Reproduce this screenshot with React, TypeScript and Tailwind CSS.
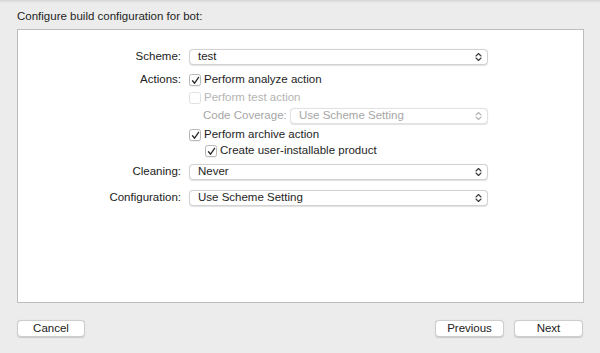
import React from "react";

const font = { fontFamily: '"Liberation Sans", Arial, sans-serif' };

function Chevrons({ disabled }: { disabled?: boolean }) {
  return (
    <svg width="7" height="10" viewBox="0 0 7 10" className="shrink-0">
      <path
        d="M1 4 L3.5 1.5 L6 4 M1 6 L3.5 8.5 L6 6"
        fill="none"
        stroke={disabled ? "#b5b5b5" : "#3a3a3a"}
        strokeWidth="1.1"
        strokeLinecap="round"
        strokeLinejoin="round"
      />
    </svg>
  );
}

function Popup({ value, disabled, className }: { value: string; disabled?: boolean; className?: string }) {
  return (
    <div
      className={
        "h-[16px] shrink-0 flex items-center justify-between pl-[8px] pr-[5px] rounded-[4px] bg-white border shadow-[0_0.5px_1px_rgba(0,0,0,0.12)] text-[11.5px] leading-none " +
        (disabled ? "text-[#a6a6a6] border-[#e2e2e2] " : "text-[#1e1e1e] border-[#d2d2d2] ") +
        (className ?? "")
      }
    >
      <span>{value}</span>
      <Chevrons disabled={disabled} />
    </div>
  );
}

function Check({ checked, disabled }: { checked?: boolean; disabled?: boolean }) {
  return (
    <div
      className={
        "w-[12px] h-[12px] rounded-[2.5px] border bg-white flex items-center justify-center shrink-0 " +
        (disabled ? "border-[#e0e0e0]" : "border-[#b8b8b8] shadow-[0_0.5px_0.5px_rgba(0,0,0,0.1)]")
      }
    >
      {checked && (
        <svg width="9" height="9" viewBox="0 0 9 9">
          <path d="M1.5 4.8 L3.6 7.2 L7.6 1.3" fill="none" stroke="#2a2a2a" strokeWidth="1.3" strokeLinecap="round" strokeLinejoin="round" />
        </svg>
      )}
    </div>
  );
}

function Label({ children }: { children: React.ReactNode }) {
  return (
    <div className="w-[171px] shrink-0 pr-[8px] text-right text-[11.5px] text-[#222] leading-none whitespace-nowrap">
      {children}
    </div>
  );
}

function Button({ children, className }: { children: React.ReactNode; className?: string }) {
  return (
    <div
      className={
        "h-[17px] flex items-center justify-center rounded-[4px] bg-white border border-[#cdcdcd] shadow-[0_0.5px_1px_rgba(0,0,0,0.15)] text-[11.5px] text-[#222] leading-none " +
        (className ?? "")
      }
    >
      {children}
    </div>
  );
}

export default function App() {
  return (
    <div style={font} className="w-[600px] h-[353px] bg-[#ececec] relative overflow-hidden flex flex-col">
      <div className="h-[3px] bg-gradient-to-b from-[#d4d4d4] to-[#ececec]" />
      <div className="pl-[17px] mt-[8px] h-[13px] text-[11.5px] leading-none text-[#1e1e1e]">
        Configure build configuration for bot:
      </div>
      <div className="ml-[17px] mt-[5px] w-[567px] h-[274px] bg-white border border-[#bdbdbd] flex flex-col">
        <div className="flex items-center mt-[19px] h-[16px]">
          <Label>Scheme:</Label>
          <Popup value="test" className="w-[299px]" />
        </div>
        <div className="flex items-center mt-[8px] h-[14px]">
          <Label>Actions:</Label>
          <div className="flex items-center gap-[3px] text-[11.5px] text-[#1e1e1e] leading-none">
            <Check checked />
            <span>Perform analyze action</span>
          </div>
        </div>
        <div className="flex items-center mt-[4px] h-[14px]">
          <Label>{""}</Label>
          <div className="flex items-center gap-[3px] text-[11.5px] text-[#b4b4b4] leading-none">
            <Check disabled />
            <span>Perform test action</span>
          </div>
        </div>
        <div className="flex items-center mt-[2px] h-[17px]">
          <Label>{""}</Label>
          <div className="ml-[14px] w-[87px] shrink-0 whitespace-nowrap text-[11.5px] text-[#a6a6a6] leading-none">
            Code Coverage:
          </div>
          <Popup value="Use Scheme Setting" disabled className="w-[198px]" />
        </div>
        <div className="flex items-center mt-[4px] h-[14px]">
          <Label>{""}</Label>
          <div className="flex items-center gap-[3px] text-[11.5px] text-[#1e1e1e] leading-none">
            <Check checked />
            <span>Perform archive action</span>
          </div>
        </div>
        <div className="flex items-center mt-[2px] h-[14px]">
          <Label>{""}</Label>
          <div className="ml-[16px] flex items-center gap-[3px] text-[11.5px] text-[#1e1e1e] leading-none">
            <Check checked />
            <span>Create user-installable product</span>
          </div>
        </div>
        <div className="flex items-center mt-[6px] h-[16px]">
          <Label>Cleaning:</Label>
          <Popup value="Never" className="w-[299px]" />
        </div>
        <div className="flex items-center mt-[10px] h-[16px]">
          <Label>Configuration:</Label>
          <Popup value="Use Scheme Setting" className="w-[299px]" />
        </div>
      </div>
      <div className="flex items-center mt-[17px] px-[17px] h-[17px]">
        <Button className="w-[68px]">Cancel</Button>
        <div className="flex-1" />
        <Button className="w-[69px]">Previous</Button>
        <Button className="ml-[10px] w-[69px]">Next</Button>
      </div>
    </div>
  );
}
